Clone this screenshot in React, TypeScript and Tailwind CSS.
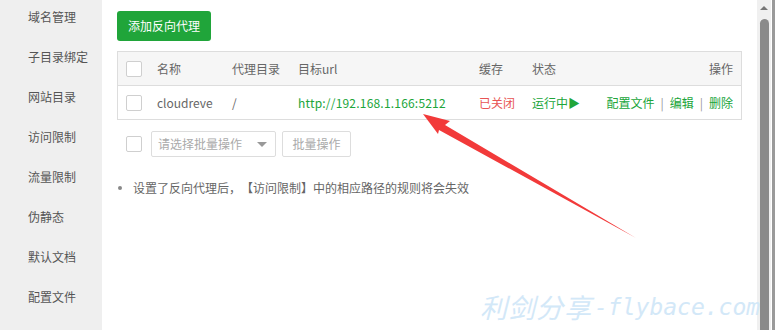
import React from "react";

const menu = ["域名管理", "子目录绑定", "网站目录", "访问限制", "流量限制", "伪静态", "默认文档", "配置文件"];

const Checkbox = () => (
    <span className="block w-[16px] h-[16px] border border-[#cfcfcf] rounded-[2px] bg-white" />
);

const Arrow = () => (
    <svg className="absolute left-0 top-0 pointer-events-none" width="775" height="330" viewBox="0 0 775 330">
        <polygon points="423,114 450,121 445,125 636,238 439,130 438,134" fill="#f23a3a" />
    </svg>
);

const App = () => {
    return (
        <div
            className="relative flex w-[775px] h-[330px] overflow-hidden bg-white text-[12px]"
            style={{ fontFamily: '"Noto Sans CJK SC", "Noto Sans", sans-serif' }}
        >
            <div className="w-[102px] shrink-0 bg-[#efefef] overflow-hidden">
                <div className="-mt-[3px] flex flex-col">
                    {menu.map((m) => (
                        <div key={m} className="h-10 flex items-center pl-[28px] text-[#555]">
                            {m}
                        </div>
                    ))}
                </div>
            </div>

            <div className="flex-1 pl-[15px] pt-[11px] pr-[15px]">
                <button className="h-[30px] w-[94px] rounded-[3px] bg-[#20a53a] text-white">添加反向代理</button>

                <div className="mt-[10px] w-[625px] border border-[#ddd]">
                    <div className="h-[34px] flex items-center bg-[#f6f6f6] border-b border-[#ddd] text-[#666]">
                        <div className="w-[39px] pl-[8px]"><Checkbox /></div>
                        <div className="w-[75px]">名称</div>
                        <div className="w-[66px]">代理目录</div>
                        <div className="w-[181px]">目标url</div>
                        <div className="w-[53px]">缓存</div>
                        <div className="flex-1">状态</div>
                        <div className="pr-[8px]">操作</div>
                    </div>
                    <div className="h-[33px] flex items-center text-[#666]">
                        <div className="w-[39px] pl-[8px]"><Checkbox /></div>
                        <div className="w-[75px]">cloudreve</div>
                        <div className="w-[66px]">/</div>
                        <div className="w-[181px] text-[#20a53a] tracking-[0.2px]">http://192.168.1.166:5212</div>
                        <div className="w-[53px] text-[#e85454]">已关闭</div>
                        <div className="flex-1 text-[#20a53a]">运行中▶</div>
                        <div className="pr-[8px] flex items-center text-[#20a53a]">
                            <span>配置文件</span>
                            <span className="mx-[6px] text-[#999]">|</span>
                            <span>编辑</span>
                            <span className="mx-[6px] text-[#999]">|</span>
                            <span>删除</span>
                        </div>
                    </div>
                </div>

                <div className="mt-[11px] flex items-center">
                    <div className="ml-[9px]"><Checkbox /></div>
                    <div className="ml-[9px] w-[125px] h-[26px] border border-[#ddd] rounded-[2px] flex items-center justify-between pl-[6px] pr-[8px] text-[#aaa]">
                        <span>请选择批量操作</span>
                        <span className="w-0 h-0 border-l-[5px] border-r-[5px] border-t-[5px] border-l-transparent border-r-transparent border-t-[#999]" />
                    </div>
                    <div className="ml-[6px] w-[69px] h-[26px] border border-[#ddd] rounded-[2px] flex items-center justify-center text-[#aaa]">
                        批量操作
                    </div>
                </div>

                <div className="mt-[22px] flex items-center h-[18px] text-[#666]">
                    <span className="ml-[1px] w-[4px] h-[4px] rounded-full bg-[#888]" />
                    <span className="ml-[11px]">
                        设置了反向代理后<span className="inline-block w-[12px]">，</span>
                        <span className="inline-block w-[12px] text-right">【</span>访问限制<span className="inline-block w-[12px]">】</span>中的相应路径的规则将会失效
                    </span>
                </div>
            </div>

            <div className="w-[18px] shrink-0 flex">
                <div className="w-[14px] bg-[#f0f0f0] flex flex-col items-center pt-[6px]">
                    <span className="w-0 h-0 border-l-[4px] border-r-[4px] border-b-[4px] border-l-transparent border-r-transparent border-b-[#777]" />
                    <span className="mt-[9px] w-[9px] flex-1 rounded-t-full bg-[#8a8a8a]" />
                </div>
                <div className="w-px bg-white" />
                <div className="flex-1 bg-[#9a9a9a]" />
            </div>

            <Arrow />

            <div className="absolute left-[480px] top-[291px] flex items-end leading-[32px] text-[#d3e8f8] italic pointer-events-none">
                <span className="text-[27px] tracking-[1px]">利剑分享</span>
                <span className="text-[23px] ml-[2px]" style={{ fontFamily: '"DejaVu Sans Mono", monospace' }}>-flybace.com</span>
            </div>
        </div>
    );
};

export default App;
